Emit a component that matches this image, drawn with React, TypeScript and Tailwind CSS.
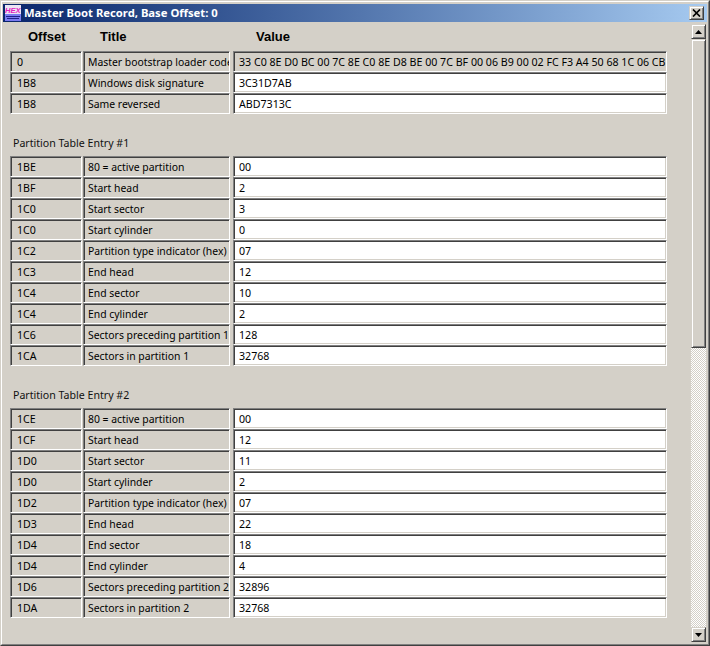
const ui = { fontFamily: '"Noto Sans", Tahoma, sans-serif' };

type R = [string, string, string];

const top: R[] = [
  ["0", "Master bootstrap loader code", "33 C0 8E D0 BC 00 7C 8E C0 8E D8 BE 00 7C BF 00 06 B9 00 02 FC F3 A4 50 68 1C 06 CB FB B9 04 00"],
  ["1B8", "Windows disk signature", "3C31D7AB"],
  ["1B8", "Same reversed", "ABD7313C"],
];
const p1: R[] = [
  ["1BE", "80 = active partition", "00"],
  ["1BF", "Start head", "2"],
  ["1C0", "Start sector", "3"],
  ["1C0", "Start cylinder", "0"],
  ["1C2", "Partition type indicator (hex)", "07"],
  ["1C3", "End head", "12"],
  ["1C4", "End sector", "10"],
  ["1C4", "End cylinder", "2"],
  ["1C6", "Sectors preceding partition 1", "128"],
  ["1CA", "Sectors in partition 1", "32768"],
];
const p2: R[] = [
  ["1CE", "80 = active partition", "00"],
  ["1CF", "Start head", "12"],
  ["1D0", "Start sector", "11"],
  ["1D0", "Start cylinder", "2"],
  ["1D2", "Partition type indicator (hex)", "07"],
  ["1D3", "End head", "22"],
  ["1D4", "End sector", "18"],
  ["1D4", "End cylinder", "4"],
  ["1D6", "Sectors preceding partition 2", "32896"],
  ["1DA", "Sectors in partition 2", "32768"],
];

const sunken =
  "h-[21px] border border-t-[#808080] border-l-[#808080] border-r-white border-b-white shadow-[inset_1px_1px_0_#404040,inset_-1px_-1px_0_#d4d0c8] overflow-hidden whitespace-nowrap leading-[18px] text-black pt-px";

function Row({ r, gray }: { r: R; gray?: boolean }) {
  return (
    <div className="flex">
      <div className={`${sunken} text-[10.6px] w-[72px] pl-[6px]`}>{r[0]}</div>
      <div className={`${sunken} text-[10.4px] w-[147px] ml-px pl-[4px] pr-[2px]`}>{r[1]}</div>
      <div className={`${sunken} text-[10.65px] w-[434px] ml-[3px] pl-[5px] pr-[2px] ${gray ? "" : "bg-white"}`}>{r[2]}</div>
    </div>
  );
}

function Section({ title, rows }: { title: string; rows: R[] }) {
  return (
    <div className="flex flex-col">
      <div className="h-[42px] pl-[3px] pt-[21px] text-[10.6px] leading-[16px] text-[#101010] whitespace-nowrap">{title}</div>
      {rows.map((r, i) => (
        <Row key={i} r={r} />
      ))}
    </div>
  );
}

const raised =
  "border border-t-[#d4d0c8] border-l-[#d4d0c8] border-r-[#404040] border-b-[#404040] shadow-[inset_1px_1px_0_#fff,inset_-1px_-1px_0_#808080] bg-[#d4d0c8]";

export default function App() {
  return (
    <div className="w-[710px] h-[646px] overflow-hidden bg-[#d4d0c8]" style={ui}>
      <div className="h-full border border-t-[#d4d0c8] border-l-[#d4d0c8] border-r-[#404040] border-b-[#404040]">
        <div className="h-full flex flex-col border border-t-white border-l-white border-r-[#808080] border-b-[#808080] pt-[2px] pl-px pr-px">
          {/* title bar */}
          <div className="h-[18px] shrink-0 flex items-center bg-gradient-to-r from-[#0a246a] to-[#a6caf0] pl-[2px] pr-[3px]">
            <svg width="16" height="16" viewBox="0 0 16 16" className="shrink-0">
              <rect width="16" height="16" fill="#ece4f4" />
              <rect y="9" width="16" height="7" fill="#7a7af0" />
              <text x="0" y="8" fontSize="7.6" fontWeight="700" fontStyle="italic" fill="#e020c0" fontFamily="Liberation Sans">HEX</text>
              <rect x="1" y="11" width="14" height="1" fill="#20208a" />
              <rect x="2" y="13" width="12" height="1" fill="#20208a" />
            </svg>
            <span className="ml-[3px] text-[11.25px] font-bold text-white whitespace-nowrap leading-[18px]">
              Master Boot Record, Base Offset: 0
            </span>
            <div className={`${raised} ml-auto w-[15px] h-[14px] flex items-center justify-center`}>
              <svg width="9" height="8" viewBox="0 0 9 8">
                <path d="M1 0.5 L8 7.5 M8 0.5 L1 7.5" stroke="#000" strokeWidth="1.7" />
              </svg>
            </div>
          </div>

          {/* body */}
          <div className="flex-1 min-h-0 flex">
            <div className="w-[688px] overflow-hidden pl-[7px] mb-px">
              <div
                className="h-[29px] pt-px flex items-center text-[13px] font-bold text-black"
                style={{ fontFamily: '"Liberation Sans", Arial, sans-serif' }}
              >
                <span className="w-[72px] pl-[18px]">Offset</span>
                <span className="w-[150px] pl-[18px]">Title</span>
                <span className="pl-[24px]">Value</span>
              </div>
              {top.map((r, i) => (
                <Row key={i} r={r} gray={i === 0} />
              ))}
              <Section title="Partition Table Entry #1" rows={p1} />
              <Section title="Partition Table Entry #2" rows={p2} />
              <Section title="Partition Table Entry #3" rows={[]} />
            </div>

            {/* scrollbar */}
            <div className="w-[15px] flex flex-col pt-[2px] pb-[2px]">
              <div className={`${raised} h-[15px] shrink-0 flex items-center justify-center`}>
                <svg width="7" height="4" viewBox="0 0 7 4"><path d="M3.5 0 L7 4 L0 4 Z" fill="#000" /></svg>
              </div>
              <div className={`${raised} h-[309px] shrink-0`} />
              <div className="flex-1 bg-[repeating-conic-gradient(#d4d0c8_0_25%,#ffffff_0_50%)] bg-[length:2px_2px]" />
              <div className={`${raised} h-[15px] shrink-0 flex items-center justify-center`}>
                <svg width="7" height="4" viewBox="0 0 7 4"><path d="M0 0 L7 0 L3.5 4 Z" fill="#000" /></svg>
              </div>
            </div>
          </div>
        </div>
      </div>
    </div>
  );
}
